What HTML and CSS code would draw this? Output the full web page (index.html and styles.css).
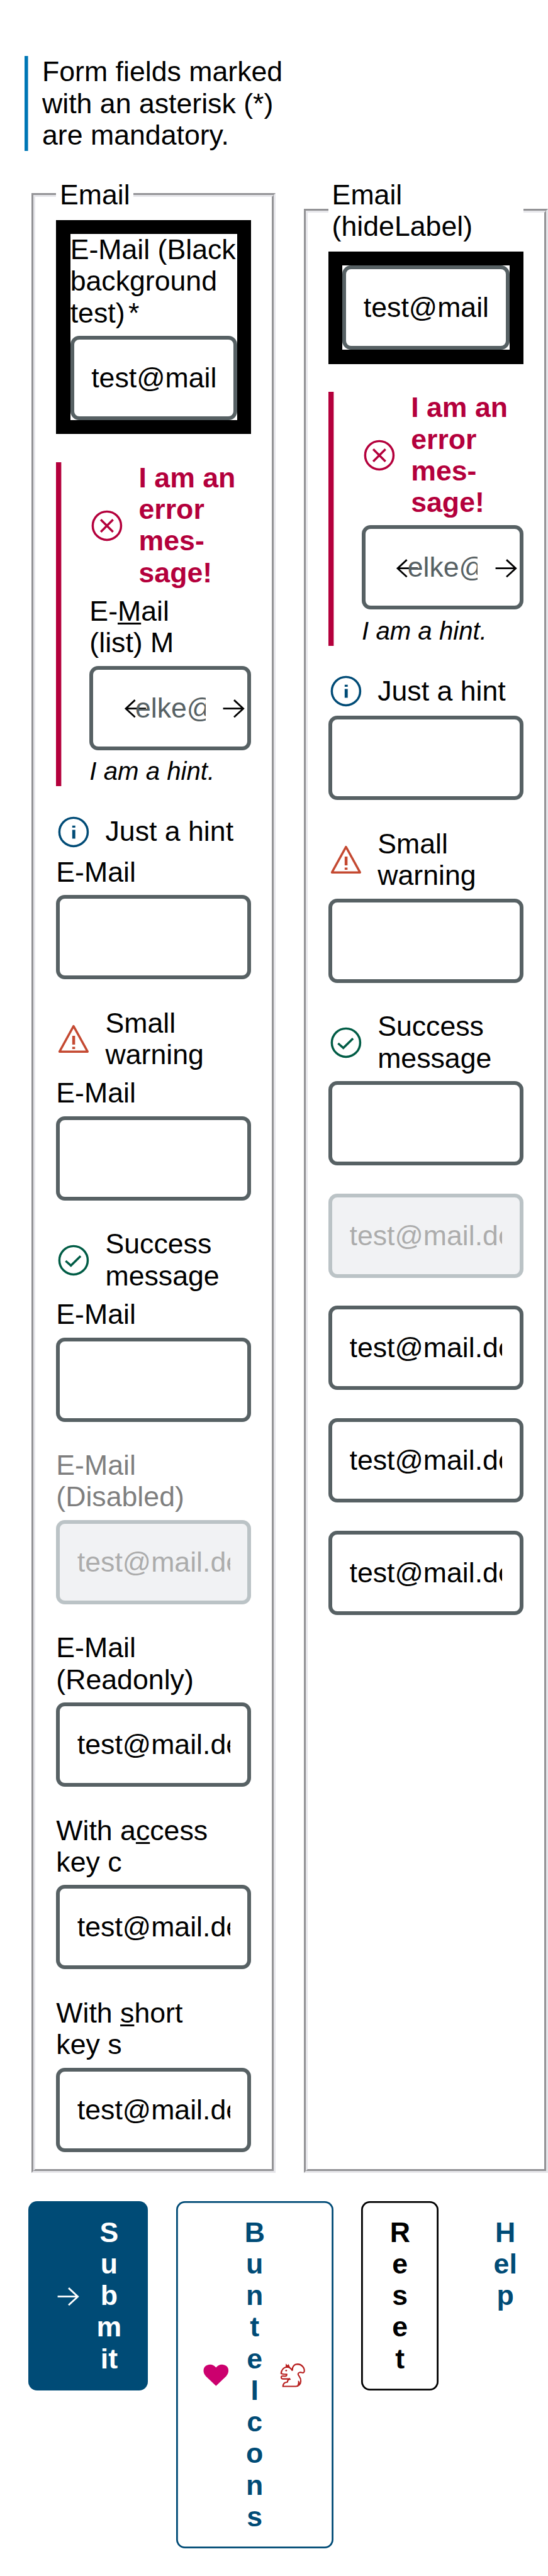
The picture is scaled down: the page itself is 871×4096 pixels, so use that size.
FILE: index.html
```html
<!DOCTYPE html>
<html lang="en">
<head>
<meta charset="utf-8">
<title>Email form</title>
<link rel="stylesheet" href="styles.css">
</head>
<body>
<svg class="defs" aria-hidden="true">
  <symbol id="error" viewBox="0 0 80 80"><circle cx="40" cy="40" r="32.3"/><path d="M26 26l28 28M54 26l-28 28"/></symbol>
  <symbol id="info" viewBox="0 0 80 80"><circle cx="40" cy="40" r="32.3"/><path class="solid" d="M37 25.500h7v4.500h-7zM37 35h7v20h-7z"/></symbol>
  <symbol id="warning" viewBox="0 0 80 80"><path stroke-linejoin="round" d="M40 11L72 69H8z"/><path class="solid" d="M37 33h6.500v20h-6.500zM37 58h6.500v5h-6.500z"/></symbol>
  <symbol id="success" viewBox="0 0 80 80"><circle cx="40" cy="40" r="32.300"/><path d="M22 41.500L34 52L56 30.500"/></symbol>
  <symbol id="left" viewBox="0 0 64 64"><path d="M56 34H9M31 14.500L10 34l21 19.500"/></symbol>
  <symbol id="right" viewBox="0 0 64 64"><path d="M8 34H55M33 14.500L54 34L33 53.500"/></symbol>
  <symbol id="heart" viewBox="0 0 64 64"><path class="solid" d="M32 57L9 35C2 28 2 17 8 12C15 6 26 7 32 15C38 7 49 6 56 12C62 17 62 28 55 35z"/></symbol>
  <symbol id="squirrel" viewBox="15 15 192 192">
    <path d="M31 100C34 77 49 61 68 57C87 57 101 68 108 82C106 54 121 37 145 37C173 38 191 62 190 84C190 96 181 98 174 95C162 90 149 94 147 105C149 119 168 126 166 153C165 174 152 189 132 189H44C45 174 52 163 66 161L75 159C75 148 81 140 92 138H47C35 139 31 132 32 124C34 114 44 119 56 119C66 120 71 116 70 107C52 106 39 107 31 100z"/>
    <path class="solid" d="M61 62L64 33L75 45L82 37L94 61zM146 150L153 151L158 160L160 175L138 186C147 175 149 163 146 150zM83 136L91 131L98 144L84 146z"/><circle class="solid" cx="66" cy="81" r="6"/>
  </symbol>
</svg>
<main class="page">
  <p class="note">Form fields marked with an asterisk (*) are mandatory.</p>
  <div class="columns">
    <fieldset class="group">
      <legend>Email</legend>
      <div class="dark"><div class="field">
        <label class="label">E-Mail (Black background test)<span class="required">*</span></label>
        <input class="input" value="test@mail.de">
      </div></div>
      <div class="field invalid">
        <div class="message bold"><svg class="status"><use href="#error"/></svg><span>I am an error mes&shy;sage!</span></div>
        <label class="label">E-<u>M</u>ail (list)&nbsp;M</label>
        <div class="input combo"><svg class="icon"><use href="#left"/></svg><input class="inner" placeholder="elke@mail.de"><svg class="icon"><use href="#right"/></svg></div>
        <em class="hint">I am a hint.</em>
      </div>
      <div class="field">
        <div class="message"><svg class="status info"><use href="#info"/></svg><span>Just a hint</span></div>
        <label class="label">E-Mail</label><input class="input">
      </div>
      <div class="field">
        <div class="message"><svg class="status warning"><use href="#warning"/></svg><span>Small warning</span></div>
        <label class="label">E-Mail</label><input class="input">
      </div>
      <div class="field">
        <div class="message"><svg class="status success"><use href="#success"/></svg><span>Success message</span></div>
        <label class="label">E-Mail</label><input class="input">
      </div>
      <div class="field disabled"><label class="label">E-Mail (Disabled)</label><input class="input" value="test@mail.de" disabled></div>
      <div class="field"><label class="label">E-Mail (Readonly)</label><input class="input" value="test@mail.de" readonly></div>
      <div class="field"><label class="label">With a<u>c</u>cess key&nbsp;c</label><input class="input" value="test@mail.de"></div>
      <div class="field"><label class="label">With <u>s</u>hort key&nbsp;s</label><input class="input" value="test@mail.de"></div>
    </fieldset>
    <fieldset class="group">
      <legend>Email (hideLabel)</legend>
      <div class="dark"><div class="field"><input class="input" value="test@mail.de"></div></div>
      <div class="field invalid">
        <div class="message bold"><svg class="status"><use href="#error"/></svg><span>I am an error mes&shy;sage!</span></div>
        <div class="input combo"><svg class="icon"><use href="#left"/></svg><input class="inner" placeholder="elke@mail.de"><svg class="icon"><use href="#right"/></svg></div>
        <em class="hint">I am a hint.</em>
      </div>
      <div class="field">
        <div class="message"><svg class="status info"><use href="#info"/></svg><span>Just a hint</span></div>
        <input class="input">
      </div>
      <div class="field">
        <div class="message"><svg class="status warning"><use href="#warning"/></svg><span>Small warning</span></div>
        <input class="input">
      </div>
      <div class="field">
        <div class="message"><svg class="status success"><use href="#success"/></svg><span>Success message</span></div>
        <input class="input">
      </div>
      <div class="field disabled"><input class="input" value="test@mail.de" disabled></div>
      <div class="field"><input class="input" value="test@mail.de" readonly></div>
      <div class="field"><input class="input" value="test@mail.de"></div>
      <div class="field"><input class="input" value="test@mail.de"></div>
    </fieldset>
  </div>
  <div class="actions">
    <button class="button primary"><svg class="icon"><use href="#right"/></svg><span class="text">Submit</span></button>
    <button class="button secondary"><svg class="icon heart"><use href="#heart"/></svg><span class="text">Bunte Icons</span><svg class="icon squirrel"><use href="#squirrel"/></svg></button>
    <button class="button normal"><span class="text">Reset</span></button>
    <button class="button ghost"><span class="text">Help</span></button>
  </div>
</main>
</body>
</html>
```
FILE: styles.css
```css
/* 1rem is a layout unit: 0.64rem is the body text size */
html {
  font-size: 69.7917px;
  background: #fff;
}

body {
  margin: 0;
  font: 0.64rem/0.72rem "Liberation Sans", Arial, sans-serif;
  color: #000;
}

*, *::before, *::after { box-sizing: border-box; }

.defs {
  position: absolute;
  width: 0;
  height: 0;
}

.page {
  width: 12.48rem;
  height: 58.68rem;
  padding-top: 1.28rem;
  overflow: hidden;
}

.note {
  width: 6.28rem;
  margin: 0 0 0.64rem 0.56rem;
  padding-left: 0.4rem;
  box-shadow: inset 0.08rem 0 #0077b6;
}

.columns {
  display: grid;
  grid-template-columns: 5.56rem 5.56rem;
  column-gap: 0.64rem;
  margin-left: 0.72rem;
}

.group {
  min-width: 0;
  margin: 0;
  padding: 0.212rem calc(0.56rem - 6px) calc(0.475rem - 6px);
  border: 6px groove #e6e6ea;
}

.group legend { padding: 0 0.08rem; }

.group > * + .field { margin-top: 0.64rem; }

.dark {
  padding: 0.32rem;
  background: #000;
}

.dark .field { background: #fff; }

.field {
  display: flex;
  flex-direction: column;
  gap: 0.16rem;
}

.invalid {
  padding-left: 0.76rem;
  box-shadow: inset 0.12rem 0 #b4003c;
}

.required { padding-left: 0.08rem; }

.disabled { opacity: 0.5; }

.label u {
  text-decoration-thickness: 0.045rem;
  text-underline-offset: 0.05rem;
}

.message {
  display: flex;
  align-items: center;
  gap: 0.32rem;
}

.bold {
  color: #b4003c;
  font-weight: 700;
}

.status, .icon {
  flex: none;
  overflow: visible;
  fill: none;
  stroke: currentColor;
}

.status {
  width: 0.8rem;
  height: 0.8rem;
  stroke-width: 5;
}

.icon {
  width: 0.64rem;
  height: 0.64rem;
  stroke-width: 4;
}

.solid {
  fill: currentColor;
  stroke: none;
}

.info { color: #004b76; }
.warning { color: #c44931; }
.success { color: #005c45; }

.input {
  width: 100%;
  height: 1.92rem;
  margin: 0;
  padding: 0 calc(0.48rem - 6px);
  border: 6px solid #576164;
  border-radius: 0.2rem;
  background: #fff;
  color: #000;
  font: inherit;
}

.input:disabled {
  border-color: #7a888e;
  background: #e4e7ea;
  color: #5c5c5c;
}

.combo {
  display: flex;
  align-items: center;
  padding: 0 calc(0.08rem - 6px) 0 calc(0.72rem - 6px);
}

/* The entry text starts over the shaft of the left arrow */
.inner {
  position: relative;
  width: 1.6rem;
  height: 100%;
  margin: 0 0.32rem 0 -0.32rem;
  padding: 0;
  border: 0;
  background: none;
  font: inherit;
}

.inner::placeholder {
  color: #576164;
  opacity: 1;
}

.hint {
  font-size: 0.576rem;
  line-height: 0.66rem;
}

.actions {
  display: flex;
  align-items: flex-start;
  gap: 0.64rem;
  margin: 0.64rem 0 0 0.64rem;
}

.button {
  display: flex;
  flex: none;
  align-items: center;
  justify-content: center;
  gap: 0.32rem;
  width: 1.76rem;
  margin: 0;
  padding: 0.36rem 0;
  border: 0;
  border-radius: 0.2rem;
  background: none;
  color: #004b76;
  font: inherit;
  font-weight: 700;
}

.text {
  width: 0.56rem;
  text-align: center;
  word-break: break-all;
}

.primary {
  width: 2.73rem;
  background: #004b76;
  color: #fff;
}

.primary .text { width: 0.58rem; }

.secondary {
  width: 3.58rem;
  box-shadow: inset 0 0 0 0.04rem #004b76;
}

.secondary .text { width: 0.47rem; }

.normal {
  box-shadow: inset 0 0 0 0.04rem #000;
  color: #000;
}

.heart { color: #cc006e; }

.squirrel {
  color: #b71c1c;
  stroke-width: 9;
}
```
